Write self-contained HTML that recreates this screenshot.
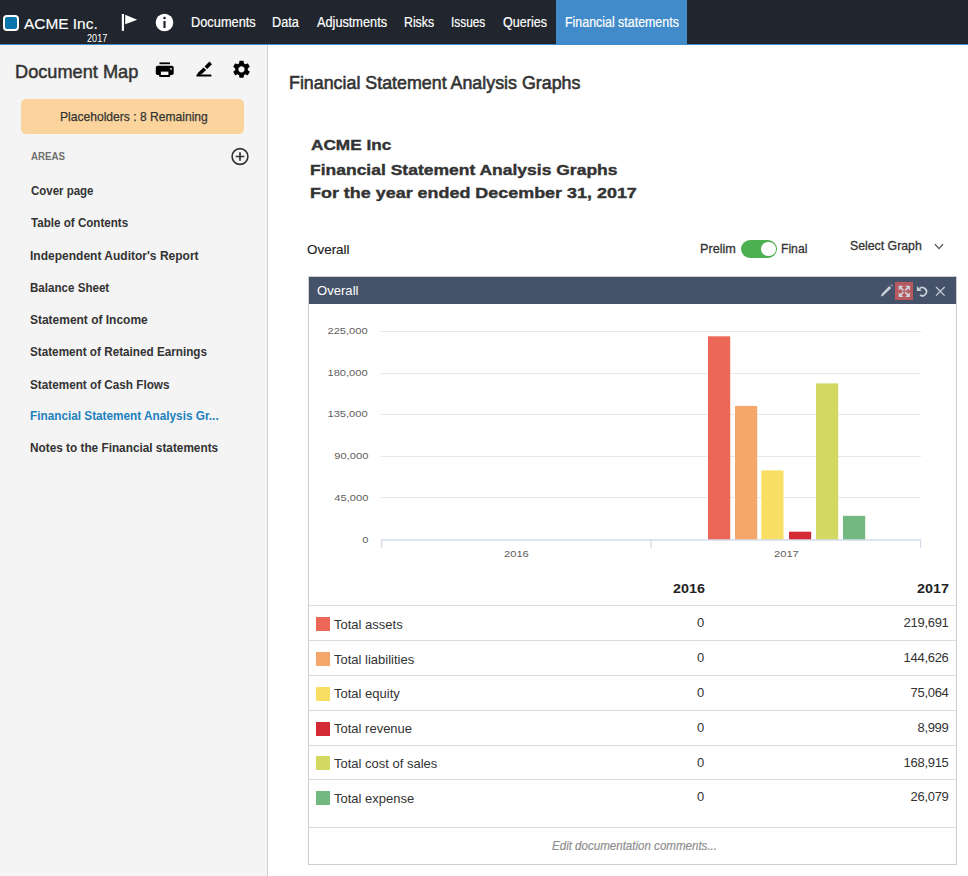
<!DOCTYPE html>
<html><head><meta charset="utf-8">
<style>
*{margin:0;padding:0;box-sizing:border-box}
html,body{width:968px;height:876px;overflow:hidden;background:#fff;font-family:"Liberation Sans",sans-serif;position:relative}
.t{position:absolute;white-space:nowrap;line-height:1}
svg{position:absolute;overflow:visible}
#top{position:absolute;left:0;top:0;width:968px;height:44px;background:#21262e}
#topline{position:absolute;left:0;top:44px;width:968px;height:1px;background:#428bca}
#act{position:absolute;left:556px;top:0;width:131px;height:44px;background:#428bca}
#logo{position:absolute;left:3px;top:15px;width:15.5px;height:15.5px;border:2px solid #fff;border-radius:4px;background:#0a75ad}
#side{position:absolute;left:0;top:45px;width:267px;height:831px;background:#f4f4f4}
#sideb{position:absolute;left:267px;top:45px;width:1px;height:831px;background:#d2d2d2}
#phbox{position:absolute;left:21px;top:99px;width:223px;height:35px;background:#fbd39c;border-radius:5px}
#tog{position:absolute;left:741px;top:240px;width:36px;height:18px;border-radius:9px;background:#4caf50}
#knob{position:absolute;left:761px;top:241.6px;width:14.6px;height:14.6px;border-radius:50%;background:#fff}
#panel{position:absolute;left:308px;top:276px;width:649px;height:589px;border:1px solid #cfcfcf}
#phead{position:absolute;left:309px;top:277px;width:647px;height:27px;background:#465269}
#redsq{position:absolute;left:895px;top:282px;width:18px;height:18px;background:#b65a60}
.yl{font-size:9.6px;color:#606060;right:600px;text-align:right;transform:scaleX(1.16);transform-origin:100% 0}
.rl{position:absolute;left:309px;width:647px;height:1px;background:#dcdcdc}
.sw{position:absolute;left:316px;width:14px;height:14px}
.tl{left:334px;font-size:13px;color:#333}
.tz{left:697px;font-size:13px;color:#333}
.tv{right:19.5px;font-size:13px;color:#333;letter-spacing:-0.3px}
</style></head><body>
<div id="top"></div><div id="topline"></div><div id="act"></div><div id="logo"></div>
<div id="side"></div><div id="sideb"></div><div id="phbox"></div>
<div id="tog"></div><div id="knob"></div>
<div id="panel"></div><div id="phead"></div><div id="redsq"></div>
<svg style="left:0;top:0" width="968" height="876">
<line x1="381" x2="921" y1="331.5" y2="331.5" stroke="#e8e8e8" stroke-width="1"/>
<line x1="381" x2="921" y1="373.5" y2="373.5" stroke="#e8e8e8" stroke-width="1"/>
<line x1="381" x2="921" y1="414.5" y2="414.5" stroke="#e8e8e8" stroke-width="1"/>
<line x1="381" x2="921" y1="456.5" y2="456.5" stroke="#e8e8e8" stroke-width="1"/>
<line x1="381" x2="921" y1="497.5" y2="497.5" stroke="#e8e8e8" stroke-width="1"/>
<rect x="708" y="336.3" width="22.2" height="203.7" fill="#ec6758"/>
<rect x="735" y="405.9" width="22.2" height="134.1" fill="#f5a76b"/>
<rect x="761.3" y="470.4" width="22.2" height="69.6" fill="#f8de62"/>
<rect x="789" y="531.7" width="22.2" height="8.3" fill="#d32a35"/>
<rect x="816" y="383.4" width="22.2" height="156.6" fill="#d3d862"/>
<rect x="843" y="515.8" width="22.2" height="24.2" fill="#73b881"/>
<path d="M381 540H921M381.5 540V548M651 540V548M920.5 540V548" stroke="#d3dbec" stroke-width="1.3" fill="none"/>
</svg>
<div class="t yl" style="top:326px">225,000</div>
<div class="t yl" style="top:368px">180,000</div>
<div class="t yl" style="top:409px">135,000</div>
<div class="t yl" style="top:451px">90,000</div>
<div class="t yl" style="top:493px">45,000</div>
<div class="t yl" style="top:535px">0</div>
<div class="rl" style="top:605px"></div>
<div class="sw" style="top:617px;background:#ec6758"></div>
<div class="t tl" style="top:618px">Total assets</div>
<div class="t tz" style="top:616px">0</div>
<div class="t tv" style="top:616px">219,691</div>
<div class="rl" style="top:640px"></div>
<div class="sw" style="top:652px;background:#f5a76b"></div>
<div class="t tl" style="top:653px">Total liabilities</div>
<div class="t tz" style="top:651px">0</div>
<div class="t tv" style="top:651px">144,626</div>
<div class="rl" style="top:675px"></div>
<div class="sw" style="top:687px;background:#f8de62"></div>
<div class="t tl" style="top:687px">Total equity</div>
<div class="t tz" style="top:686px">0</div>
<div class="t tv" style="top:686px">75,064</div>
<div class="rl" style="top:710px"></div>
<div class="sw" style="top:722px;background:#d32a35"></div>
<div class="t tl" style="top:722px">Total revenue</div>
<div class="t tz" style="top:721px">0</div>
<div class="t tv" style="top:721px">8,999</div>
<div class="rl" style="top:745px"></div>
<div class="sw" style="top:756px;background:#d3d862"></div>
<div class="t tl" style="top:757px">Total cost of sales</div>
<div class="t tz" style="top:756px">0</div>
<div class="t tv" style="top:756px">168,915</div>
<div class="rl" style="top:779px"></div>
<div class="sw" style="top:791px;background:#73b881"></div>
<div class="t tl" style="top:792px">Total expense</div>
<div class="t tz" style="top:790px">0</div>
<div class="t tv" style="top:790px">26,079</div>
<div class="rl" style="top:827px"></div>
<!-- flag -->
<svg style="left:0;top:0" width="968" height="44">
<rect x="121.8" y="14" width="2.2" height="16.8" fill="#fff"/>
<polygon points="125.2,14.7 137.2,19.75 125.2,24.2" fill="#fff"/>
<circle cx="164.5" cy="22.45" r="8.8" fill="#fff"/>
<circle cx="164.5" cy="18" r="1.3" fill="#21262e"/>
<rect x="163.4" y="21" width="2.2" height="7" fill="#21262e"/>
</svg>
<!-- icons -->
<svg style="left:0;top:0" width="968" height="876">
<!-- printer -->
<rect x="159.5" y="62.4" width="10.5" height="1.8" fill="#000"/>
<rect x="155.8" y="65.8" width="17.9" height="9.2" rx="1.8" fill="#000"/>
<rect x="159.1" y="70.5" width="11.1" height="6.4" rx="0.8" fill="#000"/>
<rect x="160.9" y="71.6" width="7.5" height="3.4" fill="#f4f4f4"/>
<circle cx="171" cy="68.8" r="0.9" fill="#f4f4f4"/>
<!-- pen -->
<polygon points="209.4,61.6 212,64.2 207.2,69 204.6,66.4" fill="#000"/>
<polygon points="203.6,67.4 206.2,70 201.2,74.4 196.5,76 198.3,72.6" fill="#000"/>
<rect x="196.5" y="74.6" width="14.9" height="1.9" rx="0.5" fill="#000"/>
<!-- gear -->
<path transform="translate(230.94,58.74) scale(0.88)" fill="#000" d="M19.14 12.94c.04-.3.06-.61.06-.94 0-.32-.02-.64-.07-.94l2.03-1.58c.18-.14.23-.41.12-.61l-1.92-3.32c-.12-.22-.37-.29-.59-.22l-2.39.96c-.5-.38-1.030-.7-1.62-.94l-.36-2.54c-.04-.24-.24-.41-.48-.41h-3.84c-.24 0-.43.17-.47.41l-.36 2.54c-.59.24-1.13.57-1.62.94l-2.39-.96c-.22-.08-.47 0-.59.22L2.74 8.87c-.12.21-.08.47.12.61l2.03 1.58c-.05.3-.09.63-.09.94s.02.64.07.94l-2.03 1.58c-.18.14-.23.41-.12.61l1.920 3.32c.12.22.37.29.59.22l2.39-.96c.5.38 1.03.7 1.62.94l.36 2.54c.05.24.24.41.48.41h3.84c.24 0 .44-.17.47-.41l.36-2.54c.59-.24 1.13-.56 1.62-.94l2.39.96c.22.08.47 0 .59-.22l1.92-3.32c.12-.22.07-.47-.12-.61l-2.01-1.58zM12 15.6c-1.98 0-3.6-1.62-3.6-3.6s1.62-3.6 3.6-3.6 3.6 1.62 3.6 3.6-1.62 3.6-3.6 3.6z"/>
<!-- plus circle -->
<circle cx="240" cy="156.5" r="7.9" fill="none" stroke="#333" stroke-width="1.6"/>
<path d="M235.7 156.5H244.3M240 152.2V160.8" stroke="#333" stroke-width="1.7"/>
<!-- chevron -->
<path d="M935 244.2L939 248.6L943 244.2" fill="none" stroke="#555" stroke-width="1.3"/>
<!-- panel icons -->
<polygon points="889.2,285.9 891.3,288 883.1,295.7 880.8,296.6 881.6,294.1" fill="#c9ced8"/><polygon points="890.6,285 891.6,284.6 892.6,285.6 892.2,286.6" fill="#c9ced8"/>
<g fill="#ccd3dc">
<polygon points="898.7,285.7 903.4,285.7 898.7,290.4"/>
<polygon points="909.9,285.7 905.2,285.7 909.9,290.4"/>
<polygon points="898.7,296.9 903.4,296.9 898.7,292.2"/>
<polygon points="909.9,296.9 905.2,296.9 909.9,292.2"/>
</g>
<path d="M899.8 286.8L903.4 290.4M908.8 286.8L905.2 290.4M899.8 295.8L903.4 292.2M908.8 295.8L905.2 292.2" stroke="#ccd3dc" stroke-width="1.7"/>
<polygon points="916.9,285.9 916.9,290.9 921.7,290.9" fill="#c9ced8"/>
<path d="M919.6 288.6A4.1 4.1 0 1 1 920 295.1" fill="none" stroke="#c9ced8" stroke-width="1.8"/>
<path d="M936 287L944.6 295.6M944.6 287L936 295.6" stroke="#c9ced8" stroke-width="1.3"/>
</svg>
<div class="t" id="acme" style="left:24.4px;top:16px;font-size:15.5px;font-weight:400;font-style:normal;color:#fff;transform:scaleX(0.9945);transform-origin:0 0;-webkit-text-stroke:0.15px currentColor">ACME Inc.</div>
<div class="t" id="yr" style="left:87.0px;top:33px;font-size:10.5px;font-weight:400;font-style:normal;color:#fff;transform:scaleX(0.8696);transform-origin:0 0;">2017</div>
<div class="t" id="n1" style="left:190.8px;top:15px;font-size:14px;font-weight:400;font-style:normal;color:#fff;transform:scaleX(0.9145);transform-origin:0 0;-webkit-text-stroke:0.2px currentColor">Documents</div>
<div class="t" id="n2" style="left:271.9px;top:15px;font-size:14px;font-weight:400;font-style:normal;color:#fff;transform:scaleX(0.9034);transform-origin:0 0;-webkit-text-stroke:0.2px currentColor">Data</div>
<div class="t" id="n3" style="left:317.0px;top:15px;font-size:14px;font-weight:400;font-style:normal;color:#fff;transform:scaleX(0.9091);transform-origin:0 0;-webkit-text-stroke:0.2px currentColor">Adjustments</div>
<div class="t" id="n4" style="left:404.1px;top:15px;font-size:14px;font-weight:400;font-style:normal;color:#fff;transform:scaleX(0.8788);transform-origin:0 0;-webkit-text-stroke:0.2px currentColor">Risks</div>
<div class="t" id="n5" style="left:451.2px;top:15px;font-size:14px;font-weight:400;font-style:normal;color:#fff;transform:scaleX(0.8462);transform-origin:0 0;-webkit-text-stroke:0.2px currentColor">Issues</div>
<div class="t" id="n6" style="left:503.1px;top:15px;font-size:14px;font-weight:400;font-style:normal;color:#fff;transform:scaleX(0.8958);transform-origin:0 0;-webkit-text-stroke:0.2px currentColor">Queries</div>
<div class="t" id="n7" style="left:564.5px;top:15px;font-size:14px;font-weight:400;font-style:normal;color:#fff;transform:scaleX(0.8866);transform-origin:0 0;-webkit-text-stroke:0.2px currentColor">Financial statements</div>
<div class="t" id="dm" style="left:14.9px;top:62px;font-size:19px;font-weight:400;font-style:normal;color:#333;transform:scaleX(0.9567);transform-origin:0 0;-webkit-text-stroke:0.5px currentColor">Document Map</div>
<div class="t" id="ph" style="left:59.5px;top:110px;font-size:13.5px;font-weight:400;font-style:normal;color:#333;transform:scaleX(0.8951);transform-origin:0 0;-webkit-text-stroke:0.25px currentColor">Placeholders : 8 Remaining</div>
<div class="t" id="ar" style="left:30.7px;top:151px;font-size:11.4px;font-weight:700;font-style:normal;color:#6f6f6f;transform:scaleX(0.8525);transform-origin:0 0;">AREAS</div>
<div class="t" id="s1" style="left:30.7px;top:184px;font-size:13.5px;font-weight:700;font-style:normal;color:#333;transform:scaleX(0.8493);transform-origin:0 0;">Cover page</div>
<div class="t" id="s2" style="left:30.7px;top:216px;font-size:13.5px;font-weight:700;font-style:normal;color:#333;transform:scaleX(0.8602);transform-origin:0 0;">Table of Contents</div>
<div class="t" id="s3" style="left:29.8px;top:249px;font-size:13.5px;font-weight:700;font-style:normal;color:#333;transform:scaleX(0.8899);transform-origin:0 0;">Independent Auditor's Report</div>
<div class="t" id="s4" style="left:29.8px;top:281px;font-size:13.5px;font-weight:700;font-style:normal;color:#333;transform:scaleX(0.8582);transform-origin:0 0;">Balance Sheet</div>
<div class="t" id="s5" style="left:29.8px;top:313px;font-size:13.5px;font-weight:700;font-style:normal;color:#333;transform:scaleX(0.8863);transform-origin:0 0;">Statement of Income</div>
<div class="t" id="s6" style="left:29.8px;top:345px;font-size:13.5px;font-weight:700;font-style:normal;color:#333;transform:scaleX(0.8675);transform-origin:0 0;">Statement of Retained Earnings</div>
<div class="t" id="s7" style="left:29.8px;top:378px;font-size:13.5px;font-weight:700;font-style:normal;color:#333;transform:scaleX(0.8692);transform-origin:0 0;">Statement of Cash Flows</div>
<div class="t" id="s8" style="left:29.8px;top:409px;font-size:13.5px;font-weight:700;font-style:normal;color:#2181be;transform:scaleX(0.8721);transform-origin:0 0;">Financial Statement Analysis Gr...</div>
<div class="t" id="s9" style="left:29.8px;top:441px;font-size:13.5px;font-weight:700;font-style:normal;color:#333;transform:scaleX(0.8738);transform-origin:0 0;">Notes to the Financial statements</div>
<div class="t" id="h1" style="left:289.1px;top:73px;font-size:19px;font-weight:400;font-style:normal;color:#333;transform:scaleX(0.9385);transform-origin:0 0;-webkit-text-stroke:0.6px currentColor">Financial Statement Analysis Graphs</div>
<div class="t" id="d1" style="left:310.8px;top:137px;font-size:15.5px;font-weight:700;font-style:normal;color:#333;transform:scaleX(1.1097);transform-origin:0 0;-webkit-text-stroke:0.4px currentColor">ACME Inc</div>
<div class="t" id="d2" style="left:309.9px;top:162px;font-size:15.5px;font-weight:700;font-style:normal;color:#333;transform:scaleX(1.1284);transform-origin:0 0;-webkit-text-stroke:0.4px currentColor">Financial Statement Analysis Graphs</div>
<div class="t" id="d3" style="left:309.8px;top:185px;font-size:15.5px;font-weight:700;font-style:normal;color:#333;transform:scaleX(1.1566);transform-origin:0 0;-webkit-text-stroke:0.4px currentColor">For the year ended December 31, 2017</div>
<div class="t" id="ov" style="left:307.0px;top:243px;font-size:13.5px;font-weight:400;font-style:normal;color:#222;transform:scaleX(0.9951);transform-origin:0 0;-webkit-text-stroke:0.15px currentColor">Overall</div>
<div class="t" id="pr" style="left:700.4px;top:242px;font-size:13.5px;font-weight:400;font-style:normal;color:#333;transform:scaleX(0.9378);transform-origin:0 0;-webkit-text-stroke:0.3px currentColor">Prelim</div>
<div class="t" id="fi" style="left:780.9px;top:242px;font-size:13.5px;font-weight:400;font-style:normal;color:#333;transform:scaleX(0.9000);transform-origin:0 0;-webkit-text-stroke:0.3px currentColor">Final</div>
<div class="t" id="sg" style="left:850.1px;top:239px;font-size:13px;font-weight:400;font-style:normal;color:#333;transform:scaleX(0.9459);transform-origin:0 0;-webkit-text-stroke:0.3px currentColor">Select Graph</div>
<div class="t" id="po" style="left:317.2px;top:284px;font-size:13.2px;font-weight:400;font-style:normal;color:#fff;transform:scaleX(0.9925);transform-origin:0 0;">Overall</div>
<div class="t" id="x16" style="left:504.4px;top:549px;font-size:9.6px;font-weight:400;font-style:normal;color:#606060;transform:scaleX(1.1619);transform-origin:0 0;">2016</div>
<div class="t" id="x17" style="left:774.4px;top:549px;font-size:9.6px;font-weight:400;font-style:normal;color:#606060;transform:scaleX(1.1619);transform-origin:0 0;">2017</div>
<div class="t" id="th1" style="left:672.8px;top:583px;font-size:12.5px;font-weight:700;font-style:normal;color:#222;transform:scaleX(1.1481);transform-origin:0 0;">2016</div>
<div class="t" id="th2" style="left:917.3px;top:583px;font-size:12.5px;font-weight:700;font-style:normal;color:#222;transform:scaleX(1.1481);transform-origin:0 0;">2017</div>
<div class="t" id="ed" style="left:551.8px;top:839px;font-size:13px;font-weight:400;font-style:italic;color:#8e8e8e;transform:scaleX(0.8886);transform-origin:0 0;-webkit-text-stroke:0.2px currentColor">Edit documentation comments...</div>
</body></html>
